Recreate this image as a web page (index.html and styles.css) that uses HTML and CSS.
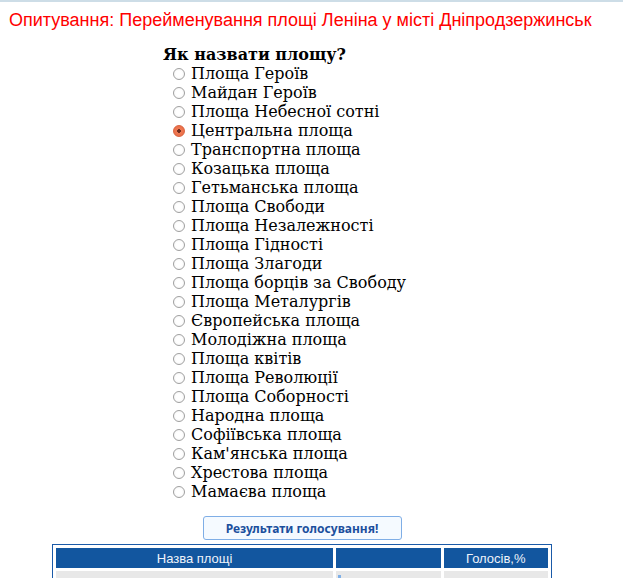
FILE: index.html
```html
<!DOCTYPE html>
<html lang="uk">
<head>
  <meta charset="UTF-8" />
  <title>Опитування</title>
  <link rel="stylesheet" href="styles.css">
</head>
<body>

  <h1 class="poll-title">Опитування: Перейменування площі Леніна у місті Дніпродзержинськ</h1>

  <form class="poll">
    <h2>Як назвати площу?</h2>
    <label class="option"><input type="radio" name="square" value="1"> Площа Героїв</label>
    <label class="option"><input type="radio" name="square" value="2"> Майдан Героїв</label>
    <label class="option"><input type="radio" name="square" value="3"> Площа Небесної сотні</label>
    <label class="option"><input type="radio" name="square" value="4" checked> Центральна площа</label>
    <label class="option"><input type="radio" name="square" value="5"> Транспортна площа</label>
    <label class="option"><input type="radio" name="square" value="6"> Козацька площа</label>
    <label class="option"><input type="radio" name="square" value="7"> Гетьманська площа</label>
    <label class="option"><input type="radio" name="square" value="8"> Площа Свободи</label>
    <label class="option"><input type="radio" name="square" value="9"> Площа Незалежності</label>
    <label class="option"><input type="radio" name="square" value="10"> Площа Гідності</label>
    <label class="option"><input type="radio" name="square" value="11"> Площа Злагоди</label>
    <label class="option"><input type="radio" name="square" value="12"> Площа борців за Свободу</label>
    <label class="option"><input type="radio" name="square" value="13"> Площа Металургів</label>
    <label class="option"><input type="radio" name="square" value="14"> Європейська площа</label>
    <label class="option"><input type="radio" name="square" value="15"> Молодіжна площа</label>
    <label class="option"><input type="radio" name="square" value="16"> Площа квітів</label>
    <label class="option"><input type="radio" name="square" value="17"> Площа Революції</label>
    <label class="option"><input type="radio" name="square" value="18"> Площа Соборності</label>
    <label class="option"><input type="radio" name="square" value="19"> Народна площа</label>
    <label class="option"><input type="radio" name="square" value="20"> Софіївська площа</label>
    <label class="option"><input type="radio" name="square" value="21"> Кам'янська площа</label>
    <label class="option"><input type="radio" name="square" value="22"> Хрестова площа</label>
    <label class="option"><input type="radio" name="square" value="23"> Мамаєва площа</label>
  </form>

  <div class="results">
    <button class="btn" type="button">Результати голосування!</button>

    <table class="votes">
      <tr>
        <th class="col-name">Назва площі</th>
        <th class="col-bar"></th>
        <th class="col-pct">Голосів,%</th>
      </tr>
      <tr>
        <td></td>
        <td><div class="bar" style="width: 3px"></div></td>
        <td></td>
      </tr>
    </table>
  </div>

</body>
</html>
```

FILE: styles.css
```css
body {
  margin: 0;
  border-top: 2px solid #cddde7;
  background: #fff;
  color: #000;
  font-family: "DejaVu Serif", serif;
}

.poll-title {
  margin: 8px 0 0 9px;
  font-family: "Liberation Sans", Arial, sans-serif;
  font-size: 18px;
  font-weight: normal;
  color: #ff0000;
}

.poll {
  margin: 14px 0 0 163px;
}

.poll h2 {
  margin: 0;
  font-size: 16px;
  font-weight: bold;
  line-height: 19px;
}

.option {
  display: flex;
  align-items: center;
  height: 19px;
  padding-left: 10px;
  font-size: 16px;
}

.option input {
  appearance: none;
  width: 12px;
  height: 12px;
  margin: 0 6px 0 0;
  border: 1px solid #a0a0a0;
  border-radius: 50%;
  background: radial-gradient(circle, #ffffff 40%, #f0f0f0 100%);
  box-sizing: border-box;
}

.option input:checked {
  border-color: #d9623f;
  background: radial-gradient(circle, #6b2a1c 0, #6b2a1c 22%, #ee7a55 30%, #e9683f 100%);
}

.results {
  width: 500px;
  margin: 15px 0 0 52px;
  text-align: center;
}

.btn {
  width: 199px;
  height: 24px;
  padding: 0;
  border: 1px solid #7faee6;
  border-radius: 3px;
  background: #f5faff;
  color: #1b4f9d;
  font-family: "Noto Sans", sans-serif;
  font-size: 12px;
  font-weight: bold;
  cursor: pointer;
}

.votes {
  width: 500px;
  margin-top: 4px;
  border: 1px solid #1a5aa8;
  border-spacing: 3px;
  font-family: "Liberation Sans", Arial, sans-serif;
  font-size: 13px;
}

.votes th {
  height: 20px;
  padding: 0;
  background: #12569f;
  color: #eef3fa;
  font-weight: normal;
}

.votes td {
  height: 20px;
  padding: 4px 2px;
  background: #e8e8e8;
  vertical-align: top;
}

.col-name { width: 276px; }
.col-bar { width: 104px; }
.col-pct { width: 104px; }

.bar {
  height: 12px;
  background: #7fb0e8;
}
```
